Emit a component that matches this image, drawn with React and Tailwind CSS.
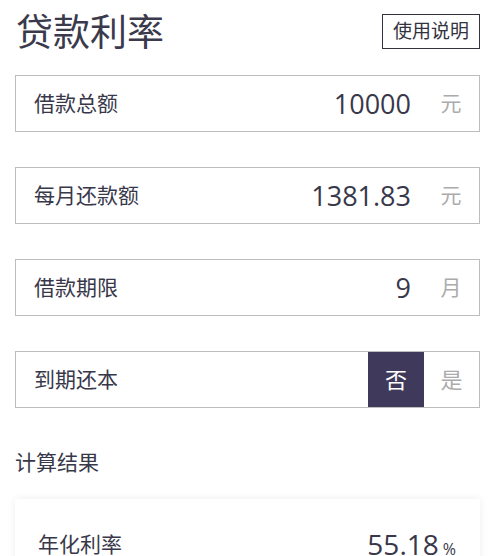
import React from "react";

const font = { fontFamily: '"Open Sans", "Noto Sans CJK SC", sans-serif' };

function Row({ label, value, unit }) {
  return (
    <div className="flex h-[57px] items-center border border-[#bdbdbd] bg-white">
      <div className="flex-1 pl-[18px] text-[21px] text-[#38384a]">{label}</div>
      <div className="pr-[12px] text-[27px] leading-none text-[#38384a]">{value}</div>
      <div className="flex w-[56px] items-center justify-center text-[21px] text-[#ababab]">{unit}</div>
    </div>
  );
}

export default function App() {
  return (
    <div className="min-h-[556px] w-[500px] overflow-hidden bg-white pl-[15px] pr-[20px]" style={font}>
      <div className="flex h-[62px] items-center justify-between">
        <div className="pl-[1px] text-[37px] leading-none text-[#3a3a4c]">贷款利率</div>
        <div className="flex h-[35px] w-[98px] items-center justify-center border-[1.5px] border-[#333340] text-[19px] text-[#333340]">
          使用说明
        </div>
      </div>
      <div className="mt-[13px] flex flex-col gap-[35px]">
        <Row label="借款总额" value="10000" unit="元" />
        <Row label="每月还款额" value="1381.83" unit="元" />
        <Row label="借款期限" value="9" unit="月" />
        <div className="flex h-[57px] items-stretch border border-[#bdbdbd] bg-white">
          <div className="flex flex-1 items-center pl-[18px] text-[21px] text-[#38384a]">到期还本</div>
          <div className="flex w-[56px] items-center justify-center bg-[#3f3a5c] text-[22px] text-white">否</div>
          <div className="flex w-[55px] items-center justify-center text-[22px] text-[#ababab]">是</div>
        </div>
      </div>
      <div className="mt-[44px] text-[21px] leading-none text-[#38384a]">计算结果</div>
      <div className="mt-[26px] h-[80px] bg-white shadow-[0_0_8px_rgba(0,0,0,0.07)]">
        <div className="flex items-center justify-between pl-[23px] pr-[24px] pt-[31px]">
          <div className="text-[21px] leading-none text-[#38384a]">年化利率</div>
          <div className="flex items-baseline text-[#38384a]">
            <span className="text-[28px] leading-none">55.18</span>
            <span className="ml-[4px] text-[16px] leading-none">%</span>
          </div>
        </div>
      </div>
    </div>
  );
}
